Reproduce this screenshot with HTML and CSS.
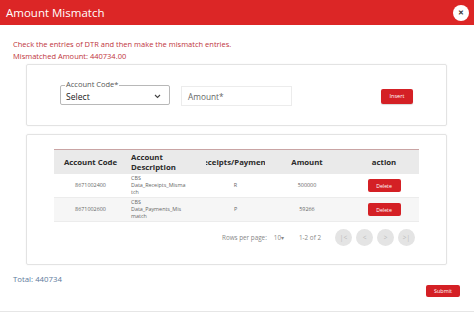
FILE: index.html
```html
<!DOCTYPE html>
<html lang="en">
<head>
    <meta charset="UTF-8">
    <meta name="viewport" content="width=device-width, initial-scale=1.0">
    <title>Amount Mismatch</title>
    <link rel="stylesheet" href="styles.css">
</head>
<body>

    <div class="modal">
        <!-- header -->
        <div class="modal-header">
            <span class="modal-title">Amount Mismatch</span>
            <button class="close-btn">&#x2715;</button>
        </div>

        <div class="modal-body">
            <p class="msg">Check the entries of DTR and then make the mismatch entries.</p>
            <p class="msg">Mismatched Amount: 440734.00</p>

            <!-- insert form -->
            <div class="card form-card">
                <fieldset class="select-box">
                    <legend>Account Code*</legend>
                    <span class="select-value">Select</span>
                    <svg class="chevron" width="7" height="5" viewBox="0 0 7 5">
                        <path d="M1 1 L3.5 3.5 L6 1" fill="none" stroke="#444" stroke-width="1.1"/>
                    </svg>
                </fieldset>
                <div class="amount-box">Amount*</div>
                <button class="btn btn-insert">Insert</button>
            </div>

            <!-- entries table -->
            <div class="card table-card">
                <table class="entries">
                    <colgroup>
                        <col class="c-code">
                        <col class="c-desc">
                        <col class="c-rp">
                        <col class="c-amt">
                        <col class="c-act">
                    </colgroup>
                    <thead>
                        <tr>
                            <th>Account Code</th>
                            <th class="left">Account Description</th>
                            <th class="clip"><div class="clip-inner"><span>Receipts/Payments</span></div></th>
                            <th>Amount</th>
                            <th>action</th>
                        </tr>
                    </thead>
                    <tbody>
                        <tr>
                            <td>8671002400</td>
                            <td class="left desc">CBS Data_Receipts_Mismatch</td>
                            <td>R</td>
                            <td>500000</td>
                            <td><button class="btn btn-del">Delete</button></td>
                        </tr>
                        <tr class="alt">
                            <td>8671002600</td>
                            <td class="left desc">CBS Data_Payments_Mismatch</td>
                            <td>P</td>
                            <td>59266</td>
                            <td><button class="btn btn-del">Delete</button></td>
                        </tr>
                    </tbody>
                </table>

                <div class="pager">
                    <span class="rows-label">Rows per page:</span>
                    <span class="rows-value">10&#x25BE;</span>
                    <span class="range">1-2 of 2</span>
                    <div class="pager-btns">
                        <span class="pg">|&lt;</span>
                        <span class="pg">&lt;</span>
                        <span class="pg">&gt;</span>
                        <span class="pg">&gt;|</span>
                    </div>
                </div>
            </div>

            <p class="total">Total: 440734</p>

            <div class="footer-row">
                <button class="btn btn-submit">Submit</button>
            </div>
        </div>
        <div class="modal-footer"></div>
    </div>

</body>
</html>
```

FILE: styles.css
```css
body {
    margin: 0;
    font-family: "Open Sans", "Noto Sans", sans-serif;
    background-color: #ffffff;
}

.modal {
    width: 474px;
}

/* header */
.modal-header {
    background-color: #dc2626;
    height: 25px;
    display: flex;
    align-items: center;
    justify-content: space-between;
    padding: 0 5px 0 6px;
    box-sizing: border-box;
}

.modal-title {
    color: #ffffff;
    font-size: 11.5px;
}

.close-btn {
    width: 16px;
    height: 16px;
    border-radius: 50%;
    border: none;
    background-color: #ffffff;
    color: #333;
    font-size: 7px;
    font-weight: bold;
    padding: 0;
    display: flex;
    align-items: center;
    justify-content: center;
}

.modal-body {
    padding: 14px 0 0 0;
}

.msg {
    margin: 0 0 0 13px;
    color: #c0343c;
    font-size: 7.5px;
    line-height: 11.5px;
}

/* cards */
.card {
    margin: 0 27px 0 26px;
    border: 1px solid #e3e3e3;
    border-radius: 2px;
    box-shadow: 0 0 2px rgba(0, 0, 0, 0.06);
}

.form-card {
    margin-top: 2px;
    height: 62px;
    box-sizing: border-box;
    display: flex;
    align-items: center;
    padding: 2px 33px 0 33px;
}

.select-box {
    margin: 0;
    width: 110px;
    height: 20px;
    box-sizing: border-box;
    border: 1px solid #b8b8b8;
    border-radius: 2px;
    padding: 0 8px 0 5px;
    display: flex;
    align-items: center;
    justify-content: space-between;
    position: relative;
    top: -1px;
}

.select-box legend {
    position: absolute;
    top: -6px;
    left: 4px;
    padding: 0 1px;
    background-color: #ffffff;
    color: #555;
    font-size: 7.5px;
    line-height: 9px;
}

.select-value {
    color: #222;
    font-size: 8.6px;
    padding-top: 3px;
}

.chevron {
    margin-top: 2px;
}

.amount-box {
    margin-left: 11px;
    width: 111px;
    height: 20px;
    box-sizing: border-box;
    border: 1px solid #ececec;
    padding: 0 6px;
    display: flex;
    align-items: center;
    color: #666;
    font-size: 8.3px;
}

.btn {
    border: none;
    border-radius: 2px;
    background-color: #d42025;
    color: #ffffff;
    font-family: "Open Sans", sans-serif;
    cursor: pointer;
    padding: 0;
}

.btn-insert {
    margin-left: auto;
    width: 32px;
    height: 15px;
    font-size: 5.5px;
    box-shadow: 0 1px 1px rgba(0, 0, 0, 0.15);
}

/* table */
.table-card {
    margin-top: 8px;
    padding: 14px 27px 0 27px;
    height: 131px;
    box-sizing: border-box;
}

.entries {
    width: 365px;
    table-layout: fixed;
    border-collapse: collapse;
    border-top: 1px solid #c9a4a4;
}

.c-code { width: 73px; }
.c-desc { width: 79px; }
.c-rp { width: 59px; }
.c-amt { width: 84px; }
.c-act { width: 70px; }

.entries th {
    background-color: #eaeaea;
    color: #2b2b2b;
    font-size: 7.8px;
    font-weight: 700;
    line-height: 10px;
    height: 24px;
    padding: 0 4px;
    text-align: center;
}

.entries th.clip {
    padding: 0;
}

.clip-inner {
    display: flex;
    justify-content: center;
    overflow: hidden;
    white-space: nowrap;
}

.clip-inner span {
    flex-shrink: 0;
}

.entries td {
    color: #666;
    font-size: 5.4px;
    line-height: 7px;
    height: 23px;
    padding: 0 4px;
    text-align: center;
    border-bottom: 1px solid #ececec;
}

.entries .left {
    text-align: left;
}

.entries td.desc {
    padding-right: 20px;
    overflow-wrap: anywhere;
}

.entries tr.alt td {
    background-color: #f6f6f6;
}

.btn-del {
    width: 33px;
    height: 13px;
    font-size: 5.2px;
}

/* pagination */
.pager {
    display: flex;
    align-items: center;
    justify-content: flex-end;
    padding: 7px 4px 0 0;
    width: 365px;
    box-sizing: border-box;
    color: #888;
    font-size: 6.3px;
}

.rows-value {
    margin-left: 7px;
}

.range {
    margin-left: 15px;
}

.pager-btns {
    display: flex;
    gap: 4px;
    margin-left: 14px;
}

.pg {
    width: 17px;
    height: 17px;
    border-radius: 50%;
    background-color: #e4e4e4;
    color: #bbbbbb;
    font-size: 6.5px;
    display: flex;
    align-items: center;
    justify-content: center;
}

/* footer */
.total {
    margin: 9px 0 0 13px;
    color: #5d7a9c;
    font-size: 7.8px;
}

.footer-row {
    display: flex;
    justify-content: flex-end;
    padding-right: 14px;
    margin-top: 1px;
}

.btn-submit {
    width: 34px;
    height: 12px;
    font-size: 5.4px;
}

.modal-footer {
    margin-top: 14px;
    border-top: 1px solid #e6e6e6;
}
```
